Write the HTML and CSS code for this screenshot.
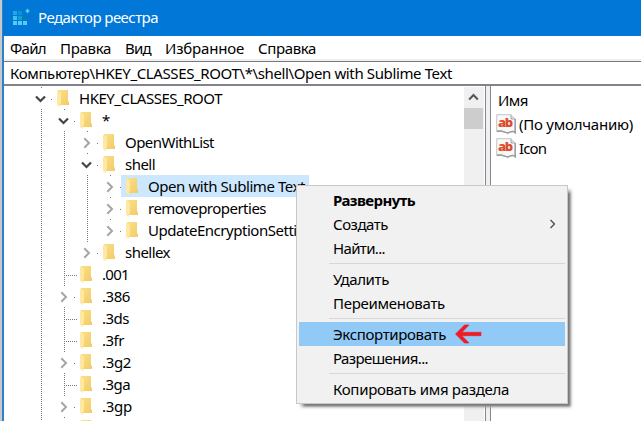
FILE: index.html
```html
<!DOCTYPE html>
<html lang="ru">
<head>
<meta charset="utf-8">
<title>Редактор реестра</title>
<link rel="stylesheet" href="styles.css">
</head>
<body>
<svg class="defs" width="0" height="0">
  <defs>
    <linearGradient id="fg" x1="0" y1="0" x2="1" y2="1"><stop offset="0" stop-color="#fbe08a"/><stop offset="1" stop-color="#f2cb66"/></linearGradient>
    <symbol id="folder" viewBox="0 0 13 17">
      <path d="M1 0H11V11L12 12V15H1Z" fill="url(#fg)"/>
      <path d="M0 .5L4 2.5V13L3 13.5V17L0 15Z" fill="#ffe8a2"/>
    </symbol>
    <symbol id="string" viewBox="0 0 20 20">
      <path d="M.7 .7H15L19.2 5V18.8C17 16 15 18 12 19C8 18.5 5 15.5 .7 17.5Z" fill="#f8f8f8" stroke="#c4c4c4"/>
      <path d="M19.2 5V18.8C17 16 15 18 12 19C8 18.5 5 15.5 1 17.5" fill="none" stroke="#999" stroke-width="1.4"/>
      <path d="M15 .7V5H19" fill="#ddd" stroke="#999" stroke-width=".8"/>
      <text x="2" y="13" textLength="15" class="ab">ab</text>
    </symbol>
  </defs>
</svg>
<div class="screen">
  <div class="edge"></div>
  <div class="window">
    <header class="title">
      <svg class="logo" width="20" height="20" viewBox="0 0 20 20">
        <path d="M1 3h4v4H1z" fill="#25a8e0"/><path d="M6 3h4v4H6z" fill="#0797cc"/>
        <path d="M1 8h4v4H1z" fill="#3fc0f0"/><path d="M6 8h4v4H6z" fill="#0b9fd4"/><path d="M11 8h4v4h-4z" fill="#067db0"/>
        <path d="M1 13h4v4H1zM6 13h4v4H6zM11 13h4v4h-4z" fill="#55cdf8"/>
        <path d="M15.5 0l3 3-3 3-3-3z" fill="#1c9ad6"/><path d="M15.5 1.5v3M14 3h3" stroke="#7ad8f8"/>
      </svg>
      <span data-w="120">Редактор реестра</span>
    </header>
    <nav class="menu"><span data-w="36">Файл</span><span data-w="51">Правка</span><span data-w="26">Вид</span><span data-w="79">Избранное</span><span data-w="58">Справка</span></nav>
    <div class="address"><span data-w="442">Компьютер\HKEY_CLASSES_ROOT\*\shell\Open with Sublime Text</span></div>
    <main class="content">
      <div class="tree" id="tree"></div>
      <div class="scroll">
        <svg class="up" width="19" height="21" viewBox="0 0 19 21"><path d="M5.2 12.5L9.5 8L13.8 12.5" fill="none" stroke="#555" stroke-width="2"/></svg>
        <div class="thumb"></div>
      </div>
      <div class="splitter"></div>
      <section class="values">
        <div class="head"><span data-w="30">Имя</span></div>
        <div class="value"><svg width="20" height="20"><use href="#string"/></svg><span data-w="114">(По умолчанию)</span></div>
        <div class="value"><svg width="20" height="20"><use href="#string"/></svg><span data-w="27">Icon</span></div>
      </section>
    </main>
  </div>
</div>
<div class="popup">
  <div class="item bold"><span data-w="82">Развернуть</span></div>
  <div class="item"><span data-w="55">Создать</span><svg class="sub" width="8" height="10" viewBox="0 0 8 10"><path d="M1.5 1L5.5 5L1.5 9" fill="none" stroke="#444" stroke-width="1.2"/></svg></div>
  <div class="item"><span data-w="52">Найти...</span></div>
  <div class="sep"></div>
  <div class="item"><span data-w="56">Удалить</span></div>
  <div class="item"><span data-w="112">Переименовать</span></div>
  <div class="sep"></div>
  <div class="item hot"><span data-w="113">Экспортировать</span><svg class="arrow" width="27" height="20" viewBox="0 0 27 20"><path d="M.5 10L9.5 1H14L7 8.3H26V11.7H7L14 19H9.5Z" fill="#ee1c24" stroke="#ee1c24" stroke-width=".6"/></svg></div>
  <div class="item"><span data-w="95">Разрешения...</span></div>
  <div class="sep"></div>
  <div class="item"><span data-w="176">Копировать имя раздела</span></div>
</div>
<script src="app.js"></script>
</body>
</html>
```
FILE: styles.css
```css
* { box-sizing: border-box; }
body { margin: 0; width: 641px; height: 421px; overflow: hidden; background: #fff; color: #000;
  font: 15px/22px "Noto Sans", "Open Sans", sans-serif; white-space: nowrap; }
svg { display: block; flex: none; }
.defs { position: absolute; }
.screen { display: flex; width: 641px; height: 421px; }
.edge { width: 4px; flex: none; background: #c9c9c9; border-right: 2px solid #2a82cc; }
.window { flex: 1; min-width: 0; display: flex; flex-direction: column; }
.title { height: 36px; flex: none; margin-left: -1px; padding-left: 9px; background: #0178d7; color: #fff; display: flex; align-items: center; gap: 6px; }
.title span { margin-top: -2px; }
.menu { height: 23px; flex: none; display: flex; align-items: center; gap: 14px; padding: 0 0 0 6px; }
.address { height: 27px; flex: none; border-top: 2px solid #f0f0f0; border-bottom: 2px solid #82828a; padding-left: 6px; display: flex; align-items: center; box-shadow: inset 0 1px #77777d; }
.content { flex: 1; min-height: 0; display: flex; }
.tree { width: 460px; flex: none; padding: 1px 0 0 26px; overflow: hidden; }
.row { display: flex; height: 22px; }
.cell { width: 23px; height: 22px; flex: none; padding-left: 11px; }
.guide::before { content: ""; display: block; width: 1px; height: 22px; background: repeating-linear-gradient(#777 0 1px, transparent 1px 2px); }
.entry { display: flex; height: 22px; margin-left: -5px; padding: 0 4px 0 5px; }
.selected { background: #cce8ff; }
.folder { margin: 3px 9px 0 0; }
.scroll { width: 20px; flex: none; margin-top: 1px; background: #f0f0f0; }
.thumb { width: 19px; height: 21px; background: #cdcdcd; }
.splitter { width: 7px; flex: none; border-left: 1px solid #fff; background: linear-gradient(90deg, #828790 0 1px, #f0f0f0 1px 5px, #828790 5px); }
.values { padding: 3px 0 0 5px; }
.head { height: 23px; padding-left: 2px; }
.value { height: 24px; display: flex; align-items: center; gap: 3px; }
.ab { font: 900 13px "Open Sans", sans-serif; fill: #dc4d31; }
.popup { position: absolute; left: 296px; top: 185px; width: 272px; height: 219px; padding: 2px; background: #f1f1f1; border: 1px solid #c8c8c8; box-shadow: 5px 5px 2px -3px #777, 4px 4px 3px -1px #aaa; }
.item { height: 24px; line-height: 24px; padding-left: 34px; display: flex; align-items: center; }
.bold { font-weight: 700; }
.hot { background: #91c9f7; }
.sub { margin: 0 8px 0 auto; }
.arrow { margin-left: 9px; }
.sep { height: 7px; padding: 3px 0; margin-left: 30px; background: #d7d7d7 content-box; }
```
FILE: app.js
```js
const rows = [
  [0, 'open', 'HKEY_CLASSES_ROOT', 143], [1, 'open', '*', 7],
  [2, 'closed', 'OpenWithList', 89], [2, 'open', 'shell', 30],
  [3, 'closed', 'Open with Sublime Text', 157, true],
  [3, 'closed', 'removeproperties', 118], [3, 'closed', 'UpdateEncryptionSettings', 173],
  [2, 'closed', 'shellex', 45], [1, 'leaf', '.001', 27], [1, 'closed', '.386', 28],
  [1, 'leaf', '.3ds', 27], [1, 'leaf', '.3fr', 22], [1, 'closed', '.3g2', 29],
  [1, 'leaf', '.3ga', 28], [1, 'closed', '.3gp', 30], [1, 'closed', '', 0]
];
const dot = (x, y) => `<rect x="${x}" y="${y}" width="1" height="1" fill="#777"/>`;
function node(kind) {
  let s = '';
  if (kind === 'leaf') {
    for (let y = 0; y < 22; y += 2) s += dot(11, y);
    for (let x = 13; x < 25; x += 2) s += dot(x, 12);
  } else {
    s += dot(11, 0) + dot(21, 12);
    s += kind === 'open'
      ? '<path d="M6 9.5L10.5 14L15 9.5" fill="none" stroke="#444" stroke-width="2.2"/>'
      : '<path d="M8.3 7.3L13 12L8.3 16.7" fill="none" stroke="#a6a6a6" stroke-width="2"/>';
  }
  return `<svg class="node" width="27" height="22">${s}</svg>`;
}
document.getElementById('tree').innerHTML = rows.map(([depth, kind, name, w, sel]) =>
  `<div class="row">${'<div class="cell guide"></div>'.repeat(depth)}${node(kind)}` +
  `<div class="entry${sel ? ' selected' : ''}"><svg class="folder" width="13" height="17"><use href="#folder"/></svg>` +
  `<span data-w="${w}">${name}</span></div></div>`
).join('');
document.querySelectorAll('[data-w]').forEach(el => {
  const n = el.textContent.length;
  if (n) el.style.letterSpacing = (el.dataset.w - el.getBoundingClientRect().width) / n + 'px';
});
```
